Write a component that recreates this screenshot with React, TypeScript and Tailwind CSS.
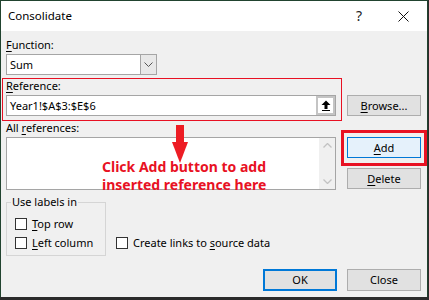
const font = "font-['Segoe_UI','Noto_Sans',sans-serif]";

function U({ c }: { c: string }) {
  return <span className="underline underline-offset-[2px] decoration-1">{c}</span>;
}

function Btn({ children, className = "" }: { children: React.ReactNode; className?: string }) {
  return (
    <div
      className={
        "w-[74px] h-[21px] flex items-center justify-center border border-[#adadad] bg-[#e1e1e1] " + className
      }
    >
      {children}
    </div>
  );
}

function Check({ children }: { children: React.ReactNode }) {
  return (
    <div className="h-[16px] flex items-center gap-[5px]">
      <span className="w-[12px] h-[12px] border border-[#333] bg-white shrink-0" />
      <span>{children}</span>
    </div>
  );
}

export default function App() {
  return (
    <div className={"w-[429px] h-[300px] bg-[#2b2b2b] text-[11px] leading-[16px] text-black " + font}>
      <div className="relative w-[428px] h-[297px] border-x border-t border-[#21432f] bg-[#f0f0f0] flex flex-col">
        {/* title bar */}
        <div className="h-[30px] shrink-0 bg-white flex items-center">
          <span className="ml-[7px] text-[11.5px] leading-[20px]">Consolidate</span>
          <span className="ml-auto mr-[36px] text-[14px] leading-[20px] text-[#222]">?</span>
          <svg width="11" height="11" viewBox="0 0 11 11" className="mr-[18px]">
            <path d="M0.5 0.5 L10.5 10.5 M10.5 0.5 L0.5 10.5" stroke="#111" strokeWidth="1" />
          </svg>
        </div>

        <div className="flex flex-col pl-[5px] pr-[6px]">
          <div className="mt-[6px] h-[16px]">
            <U c="F" />unction:
          </div>
          <div className="mt-[1px] w-[151px] h-[21px] flex border border-[#a5a5a5] bg-white">
            <span className="pl-[3px] flex-1 flex items-center">Sum</span>
            <span className="w-[16px] h-full border-l border-[#a5a5a5] bg-[#e8e8e8] flex items-center justify-center">
              <svg width="9" height="5" viewBox="0 0 9 5">
                <path d="M0.5 0.5 L4.5 4.5 L8.5 0.5" stroke="#555" fill="none" />
              </svg>
            </span>
          </div>

          <div className="mt-[3px] h-[16px]">
            <U c="R" />eference:
          </div>
          <div className="mt-[1px] flex">
            <div className="w-[330px] h-[21px] flex border border-[#a5a5a5] bg-white">
              <span className="pl-[3px] flex-1 flex items-center">Year1!$A$3:$E$6</span>
              <span className="w-[19px] h-full border-2 border-[#c4c4c4] bg-white flex items-center justify-center">
                <svg width="10" height="11" viewBox="0 0 10 11">
                  <path d="M5 0.5 L9.5 5 L6.5 5 L6.5 9 L3.5 9 L3.5 5 L0.5 5 Z" fill="#000" />
                  <rect x="1" y="10" width="8" height="1" fill="#000" />
                </svg>
              </span>
            </div>
            <Btn className="ml-auto">
              <span>
                <U c="B" />rowse...
              </span>
            </Btn>
          </div>

          <div className="mt-[4px] h-[16px]">
            All <U c="r" />eferences:
          </div>
          <div className="mt-[1px] flex">
            <div className="w-[330px] h-[53px] flex border border-[#a5a5a5] bg-white">
              <div className="flex-1" />
              <div className="w-[16px] h-full bg-[#f0f0f0] flex flex-col items-center justify-between py-[5px]">
                <svg width="9" height="5" viewBox="0 0 9 5">
                  <path d="M0.5 4.5 L4.5 0.5 L8.5 4.5" stroke="#c2c2c2" strokeWidth="1.3" fill="none" />
                </svg>
                <svg width="9" height="5" viewBox="0 0 9 5">
                  <path d="M0.5 0.5 L4.5 4.5 L8.5 0.5" stroke="#c2c2c2" strokeWidth="1.3" fill="none" />
                </svg>
              </div>
            </div>
            <div className="ml-auto flex flex-col">
              <Btn className="!border-[#0078d7] !bg-[#e5f1fb]">
                <span>
                  <U c="A" />dd
                </span>
              </Btn>
              <Btn className="mt-[10px]">
                <span>
                  <U c="D" />elete
                </span>
              </Btn>
            </div>
          </div>

          <div className="mt-[4px] flex items-end">
            <fieldset className="w-[100px] border border-[#d5d5d5] pb-[4px]">
              <legend className="ml-[4px] px-[1px] h-[16px]">Use labels in</legend>
              <div className="mt-[6px] pl-[8px]">
                <Check>
                  <U c="T" />op row
                </Check>
              </div>
              <div className="mt-[3px] pl-[8px]">
                <Check>
                  <U c="L" />eft column
                </Check>
              </div>
            </fieldset>
            <div className="ml-[10px] mb-[5px]">
              <Check>
                Create links to <U c="s" />ource data
              </Check>
            </div>
          </div>

          <div className="mt-[13px] flex justify-end gap-[10px]">
            <Btn className="h-[22px] border-2 !border-[#0078d7]">OK</Btn>
            <Btn className="h-[22px]">Close</Btn>
          </div>
        </div>

        {/* annotations */}
        <div className="absolute left-[1px] top-[77px] w-[340px] h-[43px] border border-[#e81123]" />
        <div className="absolute left-[340px] top-[129px] w-[86px] h-[36px] border-[3px] border-[#e81123]" />
        <svg className="absolute left-[169px] top-[123px]" width="20" height="40" viewBox="0 0 20 40">
          <rect x="6" y="1" width="8" height="20" fill="#ed1c24" />
          <path d="M2 18 L18 18 L10 39 Z" fill="#ed1c24" />
        </svg>
        <div className="absolute left-[101px] top-[157px] text-[14px] leading-[18px] font-bold text-[#e81123]">
          <div>Click Add button to add</div>
          <div>inserted reference here</div>
        </div>
      </div>
    </div>
  );
}
